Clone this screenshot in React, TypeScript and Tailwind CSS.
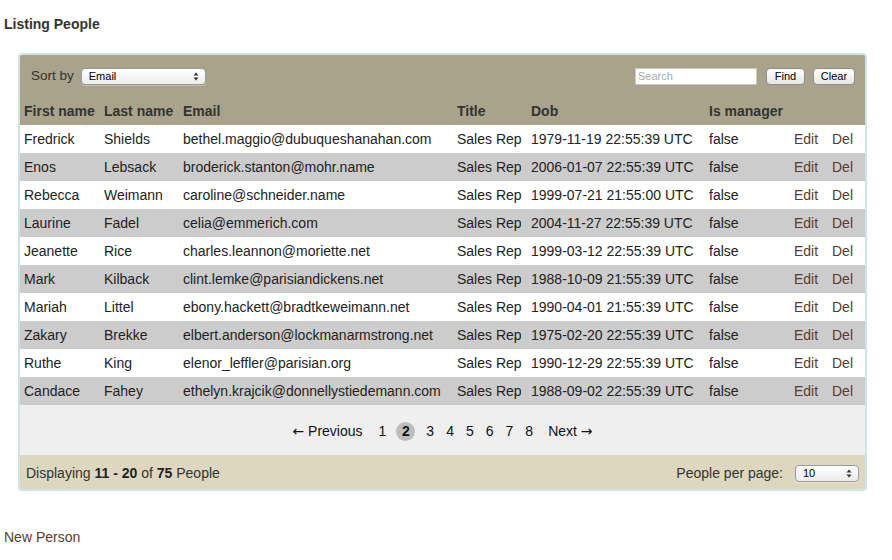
import React from 'react';

interface Person {
  first: string;
  last: string;
  email: string;
  dob: string;
}

const people: Person[] = [
  { first: 'Fredrick', last: 'Shields', email: 'bethel.maggio@dubuqueshanahan.com', dob: '1979-11-19 22:55:39 UTC' },
  { first: 'Enos', last: 'Lebsack', email: 'broderick.stanton@mohr.name', dob: '2006-01-07 22:55:39 UTC' },
  { first: 'Rebecca', last: 'Weimann', email: 'caroline@schneider.name', dob: '1999-07-21 21:55:00 UTC' },
  { first: 'Laurine', last: 'Fadel', email: 'celia@emmerich.com', dob: '2004-11-27 22:55:39 UTC' },
  { first: 'Jeanette', last: 'Rice', email: 'charles.leannon@moriette.net', dob: '1999-03-12 22:55:39 UTC' },
  { first: 'Mark', last: 'Kilback', email: 'clint.lemke@parisiandickens.net', dob: '1988-10-09 21:55:39 UTC' },
  { first: 'Mariah', last: 'Littel', email: 'ebony.hackett@bradtkeweimann.net', dob: '1990-04-01 21:55:39 UTC' },
  { first: 'Zakary', last: 'Brekke', email: 'elbert.anderson@lockmanarmstrong.net', dob: '1975-02-20 22:55:39 UTC' },
  { first: 'Ruthe', last: 'King', email: 'elenor_leffler@parisian.org', dob: '1990-12-29 22:55:39 UTC' },
  { first: 'Candace', last: 'Fahey', email: 'ethelyn.krajcik@donnellystiedemann.com', dob: '1988-09-02 22:55:39 UTC' },
];

const Arrows: React.FC = () => (
  <svg width="6" height="9" viewBox="0 0 6 9" className="shrink-0">
    <path d="M3 0.5 L5.5 3.5 H0.5 Z" fill="#333" />
    <path d="M3 8.5 L5.5 5.5 H0.5 Z" fill="#333" />
  </svg>
);

const FakeSelect: React.FC<{ value: string; width: string }> = ({ value, width }) => (
  <div className={`${width} h-[17px] flex items-center justify-between pl-[7px] pr-[6px] bg-gradient-to-b from-white to-[#ececec] border border-[#9a9a9a] rounded-[4px] text-[11px] text-black shadow-[0_1px_0_rgba(255,255,255,0.3)]`}>
    <span>{value}</span>
    <Arrows />
  </div>
);

const SmallButton: React.FC<{ label: string; width: string }> = ({ label, width }) => (
  <div className={`${width} h-[17px] flex items-center justify-center bg-gradient-to-b from-white to-[#e6e6e6] border border-[#8f8f8f] rounded-[4px] text-[11px] text-black`}>
    {label}
  </div>
);

const pages = ['1', '2', '3', '4', '5', '6', '7', '8'];

export default function App() {
  return (
    <div className="w-[892px] h-[560px] bg-white text-[#333] font-['Liberation_Sans',Arial,sans-serif] text-[14px] relative">
      <h1 className="absolute left-[4px] top-[15px] text-[14px] font-bold text-[#333] leading-[18px]">Listing People</h1>

      <div className="absolute left-[18px] top-[53px] w-[849px] border-2 border-[#cde5e5] rounded-[4px] overflow-hidden">
        <div className="bg-[#aaa38b]">
          <div className="h-[42px] flex items-center justify-between pl-[11px] pr-[10px]">
            <div className="flex items-center gap-[7px]">
              <span className="text-[13.5px] text-[#333]">Sort by</span>
              <FakeSelect value="Email" width="w-[125px]" />
            </div>
            <div className="flex items-center">
              <div className="w-[122px] h-[17px] bg-white border border-[#c8c8c8] text-[11px] text-[#aaa] pl-[2px] flex items-center">Search</div>
              <div className="ml-[9px]"><SmallButton label="Find" width="w-[39px]" /></div>
              <div className="ml-[8px]"><SmallButton label="Clear" width="w-[42px]" /></div>
            </div>
          </div>
        </div>
        <table className="w-full table-fixed border-collapse">
          <colgroup>
            <col className="w-[80px]" />
            <col className="w-[79px]" />
            <col className="w-[274px]" />
            <col className="w-[74px]" />
            <col className="w-[178px]" />
            <col className="w-[85px]" />
            <col className="w-[38px]" />
            <col />
          </colgroup>
          <thead>
            <tr className="bg-[#aaa38b] h-[28px] text-left">
              {['First name', 'Last name', 'Email', 'Title', 'Dob', 'Is manager', '', ''].map((h, i) => (
                <th key={i} className="pl-[4px] font-bold text-[#333] whitespace-nowrap">{h}</th>
              ))}
            </tr>
          </thead>
          <tbody>
            {people.map((p, i) => (
              <tr key={p.email} className={`h-[28px] ${i % 2 === 0 ? 'bg-white' : 'bg-[#cccccc]'} text-[#222]`}>
                <td className="pl-[4px] whitespace-nowrap">{p.first}</td>
                <td className="pl-[4px] whitespace-nowrap">{p.last}</td>
                <td className="pl-[4px] whitespace-nowrap">{p.email}</td>
                <td className="pl-[4px] whitespace-nowrap">Sales Rep</td>
                <td className="pl-[4px] whitespace-nowrap">{p.dob}</td>
                <td className="pl-[4px] whitespace-nowrap">false</td>
                <td className="pl-[4px] whitespace-nowrap text-[#5a3b2c]">Edit</td>
                <td className="pl-[4px] whitespace-nowrap text-[#5a3b2c]">Del</td>
              </tr>
            ))}
          </tbody>
        </table>
        <div className="h-[50px] bg-[#efefef] flex items-center justify-center text-[#111] pt-[2px]">
          <span className="mr-[16px]"><span className="font-['DejaVu_Sans',sans-serif] text-[14px]">←</span> Previous</span>
          {pages.map((n) =>
            n === '2' ? (
              <span key={n} className="w-[19px] h-[19px] rounded-full bg-[#bdbdbd] font-bold flex items-center justify-center mr-[11px] -ml-[2px]">
                {n}
              </span>
            ) : (
              <span key={n} className="mr-[12px]">{n}</span>
            )
          )}
          <span className="ml-[3px]">Next <span className="font-['DejaVu_Sans',sans-serif] text-[14px]">→</span></span>
        </div>
        <div className="h-[34px] bg-[#ded7bf] flex items-center justify-between pl-[6px] pr-[6px] pt-[2px]">
          <span className="text-[#333]">
            Displaying <b className="text-[#222]">11&nbsp;-&nbsp;20</b> of <b className="text-[#222]">75</b> People
          </span>
          <div className="flex items-center gap-[12px]">
            <span className="text-[#333]">People per page:</span>
            <FakeSelect value="10" width="w-[64px]" />
          </div>
        </div>
      </div>

      <div className="absolute left-[4px] top-[528px] text-[14px] text-[#5a3b2c] leading-[18px]">New Person</div>
    </div>
  );
}
